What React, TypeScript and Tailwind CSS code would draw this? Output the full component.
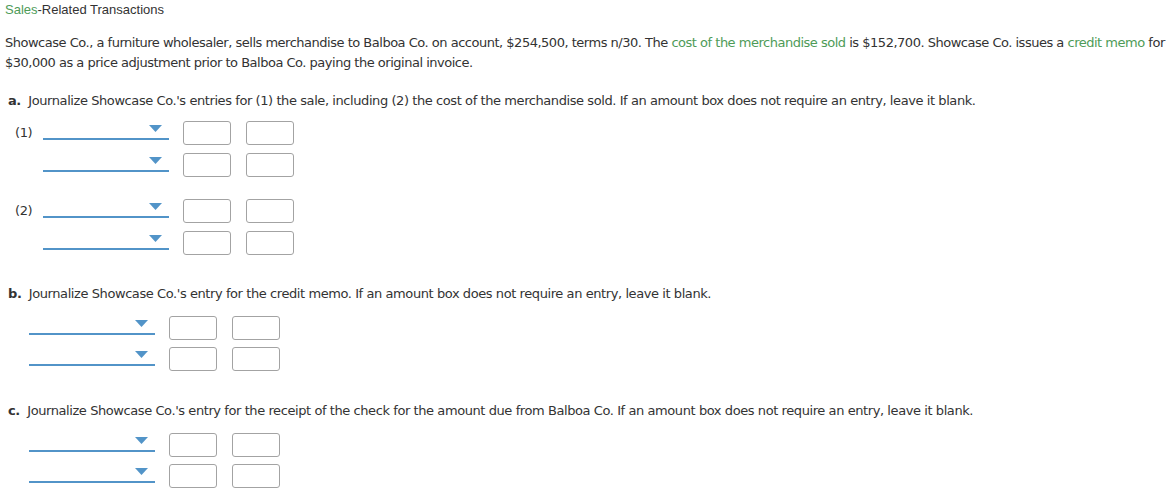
const Caret = () => (
  <svg width="13" height="7" viewBox="0 0 13 7" className="block">
    <polygon points="0,0 13,0 6.5,7" fill="#5294c8" />
  </svg>
);

function Select({ w = 126 }: { w?: number }) {
  return (
    <div
      className="h-[19px] border-b-2 border-[#5294c8] flex justify-end items-start pt-[4px] pr-[7px]"
      style={{ width: w }}
    >
      <Caret />
    </div>
  );
}

const Box = () => (
  <div className="w-[48px] h-[24px] border border-[#a3a3a3] rounded-[3px] bg-white" />
);

function Row({ label, indent }: { label?: string; indent: string }) {
  return (
    <div className="flex items-start">
      <div className={indent}>
        {label && <span className="block mt-[2px] leading-[20px]">{label}</span>}
      </div>
      <Select />
      <div className="ml-[14px]">
        <Box />
      </div>
      <div className="ml-[15px]">
        <Box />
      </div>
    </div>
  );
}

export default function App() {
  return (
    <div className="bg-white min-h-screen text-[#333] text-[13px] tracking-[-0.42px] font-['DejaVu_Sans',Verdana,sans-serif] pl-[5px] pt-0">
      <h3 className="leading-[20px] font-['Liberation_Sans',Arial,sans-serif] text-[13px] tracking-normal">
        <span className="text-[#4e9b58]">Sales</span>-Related Transactions
      </h3>

      <p className="mt-[13px] leading-[20px] tracking-[-0.49px]">
        <span className="whitespace-nowrap">
          Showcase Co., a furniture wholesaler, sells merchandise to Balboa Co. on account, $254,500, terms n/30. The{' '}
          <span className="text-[#4e9b58]">cost of the merchandise sold</span> is $152,700. Showcase Co. issues a{' '}
          <span className="text-[#4e9b58]">credit memo</span> for
        </span>
        <br />
        $30,000 as a price adjustment prior to Balboa Co. paying the original invoice.
      </p>

      {/* a */}
      <p className="mt-[18px] leading-[20px] pl-[3px]">
        <b>a.</b>&nbsp; Journalize Showcase Co.'s entries for (1) the sale, including (2) the cost of the merchandise sold. If an amount box does not require an entry, leave it blank.
      </p>
      <div className="mt-[10px] pl-[10px] flex flex-col gap-[8px]">
        <Row label="(1)" indent="w-[28px]" />
        <Row indent="w-[28px]" />
      </div>
      <div className="mt-[22px] pl-[10px] flex flex-col gap-[8px]">
        <Row label="(2)" indent="w-[28px]" />
        <Row indent="w-[28px]" />
      </div>

      {/* b */}
      <p className="mt-[29px] leading-[20px] pl-[3px]">
        <b>b.</b>&nbsp; Journalize Showcase Co.'s entry for the credit memo. If an amount box does not require an entry, leave it blank.
      </p>
      <div className="mt-[12px] pl-[24px] flex flex-col gap-[7px]">
        <Row indent="w-0" />
        <Row indent="w-0" />
      </div>

      {/* c */}
      <p className="mt-[30px] leading-[20px] pl-[3px]">
        <b>c.</b>&nbsp; Journalize Showcase Co.'s entry for the receipt of the check for the amount due from Balboa Co. If an amount box does not require an entry, leave it blank.
      </p>
      <div className="mt-[12px] pl-[24px] flex flex-col gap-[7px]">
        <Row indent="w-0" />
        <Row indent="w-0" />
      </div>
    </div>
  );
}
